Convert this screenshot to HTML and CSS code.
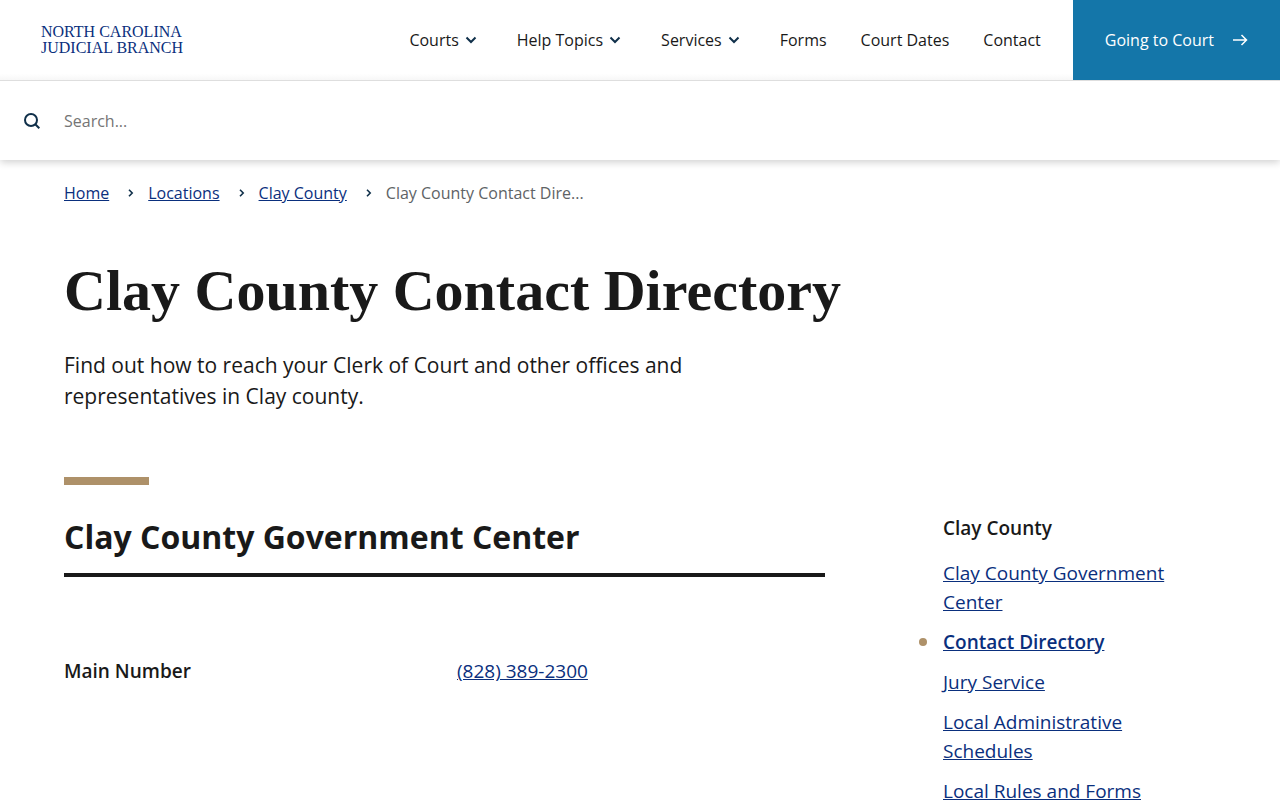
FILE: index.html
```html
<!DOCTYPE html>
<html lang="en">
<head>
<meta charset="utf-8">
<meta name="viewport" content="width=device-width, initial-scale=1">
<title>Clay County Contact Directory</title>
<link rel="stylesheet" href="styles.css">
</head>
<body>
<header class="site-header">
  <div class="topbar">
    <a class="brand" href="#">NORTH CAROLINA<br>JUDICIAL BRANCH</a>
    <nav class="main-nav" aria-label="Main">
      <button class="nav-item" type="button">Courts
        <svg class="caret" viewBox="0 0 12 8" aria-hidden="true"><path d="M1.500 1.500 6 6l4.500-4.500"/></svg></button>
      <button class="nav-item" type="button">Help Topics
        <svg class="caret" viewBox="0 0 12 8" aria-hidden="true"><path d="M1.500 1.500 6 6l4.500-4.500"/></svg></button>
      <button class="nav-item" type="button">Services
        <svg class="caret" viewBox="0 0 12 8" aria-hidden="true"><path d="M1.500 1.500 6 6l4.500-4.500"/></svg></button>
      <a class="nav-item" href="#">Forms</a>
      <a class="nav-item" href="#">Court Dates</a>
      <a class="nav-item" href="#">Contact</a>
    </nav>
    <a class="cta" href="#">Going to Court
      <svg class="arrow" viewBox="0 0 16 12" aria-hidden="true"><path d="M1 6h13.500M9.500 1l5 5-5 5"/></svg></a>
  </div>
  <form class="search" role="search">
    <label class="search-label" for="q" aria-label="Search">
      <svg class="search-icon" viewBox="0 0 16 16" aria-hidden="true"><circle cx="7" cy="7" r="6"/><path d="m11.300 11.300 4 4"/></svg>
    </label>
    <input class="search-input" id="q" type="text" placeholder="Search...">
  </form>
</header>
<main class="page">
  <nav aria-label="Breadcrumb">
    <ol class="crumbs">
      <li><a href="#">Home</a></li>
      <li><svg class="chev" viewBox="0 0 6 8" aria-hidden="true"><path d="m1 .8 3.200 3.200L1 7.200"/></svg><a href="#">Locations</a></li>
      <li><svg class="chev" viewBox="0 0 6 8" aria-hidden="true"><path d="m1 .8 3.200 3.200L1 7.200"/></svg><a href="#">Clay County</a></li>
      <li><svg class="chev" viewBox="0 0 6 8" aria-hidden="true"><path d="m1 .8 3.200 3.200L1 7.200"/></svg><span class="current">Clay County Contact Dire...</span></li>
    </ol>
  </nav>
  <h1 class="title">Clay County Contact Directory</h1>
  <p class="lead">Find out how to reach your Clerk of Court and other offices and representatives in Clay county.</p>
  <div class="accent"></div>
  <div class="columns">
    <section class="content">
      <h2 class="section-title">Clay County Government Center</h2>
      <dl class="contact">
        <dt>Main Number</dt>
        <dd><a href="tel:8283892300">(828) 389-2300</a></dd>
      </dl>
    </section>
    <aside class="sidebar">
      <h2 class="side-title">Clay County</h2>
      <ul class="side-list">
        <li><a href="#">Clay County Government Center</a></li>
        <li class="active"><a href="#" aria-current="page">Contact Directory</a></li>
        <li><a href="#">Jury Service</a></li>
        <li><a href="#">Local Administrative Schedules</a></li>
        <li><a href="#">Local Rules and Forms</a></li>
      </ul>
    </aside>
  </div>
</main>
</body>
</html>
```
FILE: styles.css
```css
* { box-sizing: border-box; }
html { overflow-x: hidden; scrollbar-width: none; }
body {
  margin: 0;
  background: #fff;
  color: #191919;
  font-family: "Open Sans", "Noto Sans", sans-serif;
  font-size: 16px;
  line-height: 24px;
}
a { color: #0a2f7d; }
svg { fill: none; stroke: #10304a; flex: none; }
h1, h2, p, ul, ol, dl, dd { margin: 0; padding: 0; }
ul, ol { list-style: none; }

.site-header { box-shadow: 0 2px 8px rgba(0, 0, 0, .2); }
.topbar {
  display: flex;
  align-items: center;
  min-height: 80px;
  background: linear-gradient(#fff 92%, #f7f7f7);
}
.brand {
  margin: 0 auto 0 41px;
  color: #0a2f7d;
  font: 16px/16px "Liberation Serif", serif;
  text-decoration: none;
  white-space: nowrap;
}
.main-nav { display: flex; gap: 34px; margin-right: 32px; }
.nav-item {
  display: flex;
  align-items: center;
  gap: 6px;
  padding: 0;
  border: 0;
  background: none;
  color: #191919;
  font: inherit;
  text-decoration: none;
  white-space: nowrap;
}
.caret { width: 12px; height: 8px; margin-right: 6px; stroke-width: 2; }
.cta {
  display: flex;
  align-items: center;
  align-self: stretch;
  gap: 18px;
  padding: 0 32px;
  background: #1476a9;
  color: #fff;
  text-decoration: none;
  white-space: nowrap;
}
.arrow { width: 16px; height: 12px; stroke: #fff; stroke-width: 1.5; }
.search {
  display: flex;
  align-items: center;
  height: 80px;
  padding-left: 24px;
  border-top: 1px solid #dedede;
  background: #fff;
}
.search-label { display: flex; }
.search-icon { width: 16px; height: 16px; stroke-width: 2; }
.search-input {
  flex: 1;
  height: 100%;
  padding: 0 24px;
  border: 0;
  outline: 0;
  background: none;
  color: #191919;
  font: inherit;
}
.search-input::placeholder { color: #757575; }

.page { padding: 21px 64px 0; }
.crumbs { display: flex; }
.crumbs li { display: flex; align-items: center; }
.chev { width: 6px; height: 8px; margin: 0 14px 0 19px; stroke-width: 1.6; }
.current { color: #5e6366; }
.title {
  margin-top: 50px;
  font: 700 58px/72px "Liberation Serif", serif;
}
.lead {
  max-width: 660px;
  margin-top: 23px;
  font-size: 21px;
  line-height: 31px;
}
.accent { width: 85px; height: 8px; margin-top: 65px; background: #ae9169; }
.columns {
  display: grid;
  grid-template-columns: 761fr 273fr;
  gap: 118px;
  margin-top: 28px;
}
.section-title {
  padding: 4px 0 16px;
  border-bottom: 4px solid #191919;
  font-size: 32px;
  line-height: 40px;
}
.contact {
  display: grid;
  grid-template-columns: 393fr 368fr;
  margin-top: 80px;
  font-size: 19px;
  line-height: 29px;
}
.contact dt { font-weight: 600; }
.sidebar { padding-top: 1px; font-size: 19px; line-height: 29px; }
.side-title { font-size: 19px; line-height: 29px; font-weight: 600; }
.side-list { display: grid; gap: 11px; margin-top: 16px; }
.side-list li { position: relative; max-width: 240px; }
.active { font-weight: 600; }
.active::before {
  content: "";
  position: absolute;
  left: -24px;
  top: 10px;
  width: 8px;
  height: 8px;
  border-radius: 50%;
  background: #ae9169;
}
```
